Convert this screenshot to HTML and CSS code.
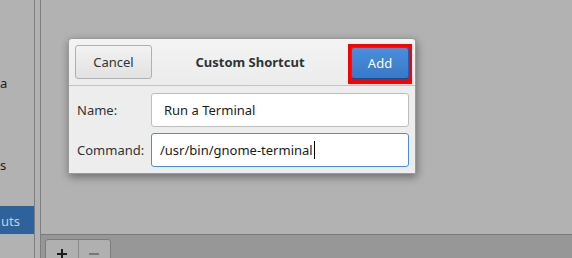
FILE: index.html
```html
<!DOCTYPE html>
<html>
<head>
<meta charset="utf-8">
<link rel="stylesheet" href="styles.css">
</head>
<body>
<div class="window">
  <aside class="sidebar">
    <ul class="cats">
      <li class="cat first">a</li>
      <li class="cat"></li>
      <li class="cat"></li>
      <li class="cat">s</li>
      <li class="cat"></li>
      <li class="cat selected">uts</li>
    </ul>
  </aside>
  <div class="gutter"></div>
  <main class="main">
    <div class="content"></div>
    <div class="toolbar">
      <div class="btn-group">
        <button class="tool-btn plus" aria-label="Add">
          <svg class="icon" width="12" height="12" viewBox="0 0 12 12"><path d="M1 6H11M6 1V11" stroke="#1c1c1c" stroke-width="2" fill="none"/></svg>
        </button>
        <button class="tool-btn minus" aria-label="Remove">
          <svg class="icon" width="12" height="12" viewBox="0 0 12 12"><path d="M1 6H11" stroke="#777777" stroke-width="2" fill="none"/></svg>
        </button>
      </div>
    </div>
  </main>
</div>

<div class="dialog">
  <header class="dialog-header">
    <button class="btn cancel">Cancel</button>
    <h1 class="title">Custom Shortcut</h1>
    <div class="highlight"><button class="btn add">Add</button></div>
  </header>
  <div class="dialog-body">
    <div class="field">
      <label class="field-label">Name:</label>
      <div class="entry">Run a Terminal</div>
    </div>
    <div class="field">
      <label class="field-label">Command:</label>
      <div class="entry focused">/usr/bin/gnome-terminal<span class="caret"></span></div>
    </div>
  </div>
</div>
</body>
</html>
```

FILE: styles.css
```css
* { box-sizing: border-box; }
html, body {
  margin: 0;
  padding: 0;
  width: 572px;
  height: 258px;
  overflow: hidden;
  background: #b2b2b2;
  font-family: "Noto Sans", "DejaVu Sans", sans-serif;
  font-size: 13px;
  color: #2e3436;
}
.window {
  display: flex;
  width: 572px;
  height: 258px;
}
.sidebar {
  width: 35px;
  flex-shrink: 0;
  border-right: 1px solid #7e7e7e;
  background: #b2b2b2;
  overflow: hidden;
}
.cats {
  list-style: none;
  margin: 0;
  padding: 69px 0 0 0;
}
.cat {
  height: 28px;
  display: flex;
  align-items: center;
  white-space: nowrap;
  color: #1e1f20;
  font-size: 13px;
  padding: 2px 0 0 0;
}
.cat.first { height: 25px; }
.cat.selected {
  background: #2f629b;
  color: #c3cfdc;
  padding-left: 1px;
}
.gutter {
  width: 6px;
  flex-shrink: 0;
  border-right: 1px solid #7e7e7e;
  background: #b2b2b2;
}
.main {
  flex: 1;
  display: flex;
  flex-direction: column;
  min-height: 0;
}
.content {
  height: 234px;
  flex-shrink: 0;
  background: #b2b2b2;
}
.toolbar {
  flex: 1;
  min-height: 0;
  overflow: hidden;
  border-top: 1px solid #7a7a7a;
  background: #979797;
  padding: 4px 0 0 4px;
}
.btn-group {
  display: flex;
  width: 66px;
  height: 30px;
  border: 1px solid #7c7c7c;
  border-radius: 3px 3px 0 0;
  background: #b0b0b0;
  overflow: hidden;
}
.tool-btn {
  flex: 1;
  border: none;
  background: transparent;
  padding: 8px 0 0 0;
  display: flex;
  justify-content: center;
  align-items: flex-start;
}
.tool-btn.plus {
  border-right: 1px solid #8a8a8a;
}
.icon { display: block; }

.dialog {
  position: absolute;
  left: 68px;
  top: 38px;
  width: 348px;
  height: 136px;
  background: #ededed;
  border: 1px solid #9a9a9a;
  border-radius: 4px 4px 0 0;
  box-shadow: 1px 3px 8px rgba(0,0,0,0.4);
  display: flex;
  flex-direction: column;
}
.dialog-header {
  height: 47px;
  display: flex;
  align-items: flex-start;
  padding: 6px 3px 0 6px;
  background: linear-gradient(#f3f3f3, #ececec);
  border-bottom: 1px solid #c4c4c4;
  border-radius: 4px 4px 0 0;
}
.btn {
  font-family: inherit;
  font-size: 13px;
  border-radius: 3px;
}
.cancel {
  width: 77px;
  height: 34px;
  border: 1px solid #b0b0b0;
  background: linear-gradient(#f2f2f2, #e2e2e2);
  color: #2e3436;
}
.title {
  flex: 1;
  margin: 0;
  height: 34px;
  line-height: 34px;
  text-align: center;
  font-size: 13px;
  font-weight: bold;
  color: #2e3436;
}
.highlight {
  background: #ff0000;
  padding: 3px 3px 5px 3px;
  margin-top: -1px;
}
.add {
  display: block;
  width: 58px;
  height: 32px;
  border: 1px solid #2a5fa6;
  border-bottom-color: #1e4a86;
  background: linear-gradient(#4a8fdb, #3879c9);
  color: #ffffff;
  padding: 0;
}
.dialog-body {
  flex: 1;
  display: flex;
  flex-direction: column;
  gap: 6px;
  padding: 7px 6px 0 8px;
}
.field {
  display: flex;
  align-items: center;
}
.field-label {
  width: 74px;
  color: #2e3436;
}
.entry {
  width: 258px;
  height: 34px;
  border: 1px solid #bdbdbd;
  border-radius: 3px;
  background: #ffffff;
  padding: 0 12px;
  display: flex;
  align-items: center;
  color: #1b1b1b;
}
.entry.focused {
  border-color: #4a90d9;
  padding-left: 8px;
}
.caret {
  display: inline-block;
  width: 1px;
  height: 18px;
  background: #000;
  margin-left: 1px;
}
```
